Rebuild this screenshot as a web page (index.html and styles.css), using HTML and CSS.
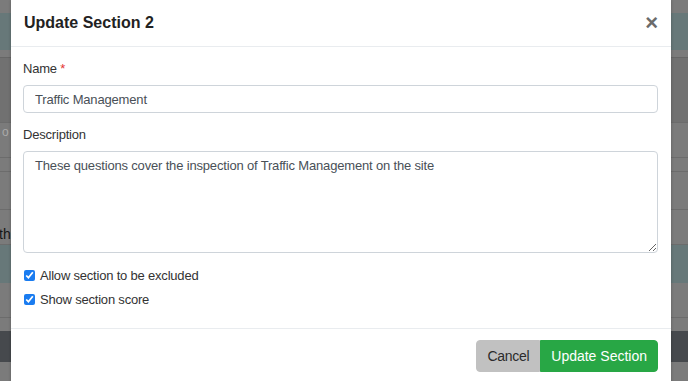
FILE: index.html
```html
<!DOCTYPE html>
<html>
<head>
  <meta charset="UTF-8">
  <title>Update Section</title>
  <link rel="stylesheet" href="styles.css">
</head>
<body>

<!-- page behind the modal, already dimmed by the backdrop -->
<div class="page">
  <div class="row" style="height: 13px;"></div>
  <div class="row teal" style="height: 37px;"></div>
  <div class="row" style="height: 7px;"></div>
  <div class="row mid line" style="height: 66px;"></div>
  <div class="row line" style="height: 35px;"><span class="faint">o</span></div>
  <div class="row line" style="height: 14px;"></div>
  <div class="row line" style="height: 38px;"></div>
  <div class="row line" style="height: 35px;"><span class="dark">thi</span></div>
  <div class="row teal" style="height: 38px;"></div>
  <div class="row line" style="height: 35px;"></div>
  <div class="row" style="height: 13px;"></div>
  <div class="row footer-bar" style="height: 31px;"></div>
  <div class="row" style="height: 19px;"></div>
</div>

<div class="modal">
  <div class="modal-header">
    <h5 class="modal-title">Update Section 2</h5>
    <button type="button" class="close">&times;</button>
  </div>

  <div class="modal-body">
    <label for="name">Name <span class="required">*</span></label>
    <input type="text" id="name" class="form-control" value="Traffic Management">

    <label for="description">Description</label>
    <textarea id="description" class="form-control">These questions cover the inspection of Traffic Management on the site</textarea>

    <div class="check first">
      <input type="checkbox" id="excluded" checked>
      <label for="excluded">Allow section to be excluded</label>
    </div>
    <div class="check">
      <input type="checkbox" id="score" checked>
      <label for="score">Show section score</label>
    </div>
  </div>

  <div class="modal-footer">
    <div class="btn-group">
      <button type="button" class="btn btn-cancel">Cancel</button>
      <button type="submit" class="btn btn-success">Update Section</button>
    </div>
  </div>
</div>

</body>
</html>
```

FILE: styles.css
```css
body {
	margin: 0;
	font-family: "Liberation Sans", Arial, sans-serif;
	font-size: 13px;
	color: #212529;
	overflow: hidden;
}

/* Dimmed page underneath */
.page {
	height: 381px;
	background-color: #7b7b7b;
}

.row {
	background-color: #7b7b7b;
	box-sizing: border-box;
	font-size: 14px;
	padding-left: 2px;
}

.row.line {
	border-bottom: 1px solid #6c6c6c;
}

.row.teal {
	background-color: #677879;
}

.row.mid {
	background-color: #717171;
	border-top: 1px solid #666;
}

.row.footer-bar {
	background-color: #46494d;
}

.faint {
	display: inline-block;
	padding-top: 2px;
	color: #a9a9a9;
	font-size: 12px;
}

.dark {
	display: inline-block;
	padding-top: 16px;
	margin-left: -3px;
	color: #161616;
}

/* The modal dialog */
.modal {
	position: absolute;
	top: 0;
	left: 11px;
	width: 660px;
	height: 400px;
	background-color: #fff;
	box-shadow: 0 0 3px rgba(0, 0, 0, 0.25);
}

.modal-header {
	display: flex;
	align-items: center;
	justify-content: space-between;
	height: 46px;
	padding: 0 13px 0 13px;
	border-bottom: 1px solid #e9ecef;
}

.modal-title {
	margin: 0;
	font-size: 16px;
	font-weight: bold;
	line-height: 22px;
	color: #222;
}

.close {
	background: none;
	border: none;
	padding: 0;
	font-family: "Liberation Sans", Arial, sans-serif;
	font-size: 22px;
	font-weight: bold;
	line-height: 22px;
	color: #6b6b6b;
	cursor: pointer;
}

.modal-body {
	padding: 14px 13px 20px 12px;
	letter-spacing: -0.2px;
}

.modal-body > label {
	display: block;
	line-height: 16px;
	margin-bottom: 8px;
	color: #333;
}

.required {
	color: #e3342f;
}

.form-control {
	display: block;
	width: 100%;
	box-sizing: border-box;
	border: 1px solid #ced4da;
	border-radius: 4px;
	font-family: "Liberation Sans", Arial, sans-serif;
	font-size: 13px;
	letter-spacing: -0.17px;
	color: #495057;
	padding: 0 11px;
}

input.form-control {
	height: 28px;
	margin-bottom: 14px;
}

textarea.form-control {
	height: 102px;
	padding-top: 5px;
	line-height: 18px;
}

.check {
	display: flex;
	align-items: center;
	height: 18px;
	margin-top: 6px;
	color: #333;
}

.check.first {
	margin-top: 13px;
}

.check input {
	width: 11px;
	height: 11px;
	margin: 0 5px 0 1px;
	accent-color: #1a7cf0;
}

/* Footer with the action buttons */
.modal-footer {
	display: flex;
	justify-content: flex-end;
	padding: 11px 13px 0 0;
	border-top: 1px solid #e9ecef;
}

.btn-group {
	display: flex;
}

.btn {
	height: 32px;
	padding: 0 10px;
	border: 1px solid transparent;
	font-family: "Liberation Sans", Arial, sans-serif;
	font-size: 14px;
	cursor: pointer;
}

.btn-cancel {
	background-color: #c1c1c1;
	border-color: #c1c1c1;
	color: #2b2b2b;
	border-radius: 4px 0 0 4px;
	letter-spacing: -0.3px;
}

.btn-success {
	background-color: #28a745;
	border-color: #28a745;
	color: #fff;
	border-radius: 0 4px 4px 0;
}
```
